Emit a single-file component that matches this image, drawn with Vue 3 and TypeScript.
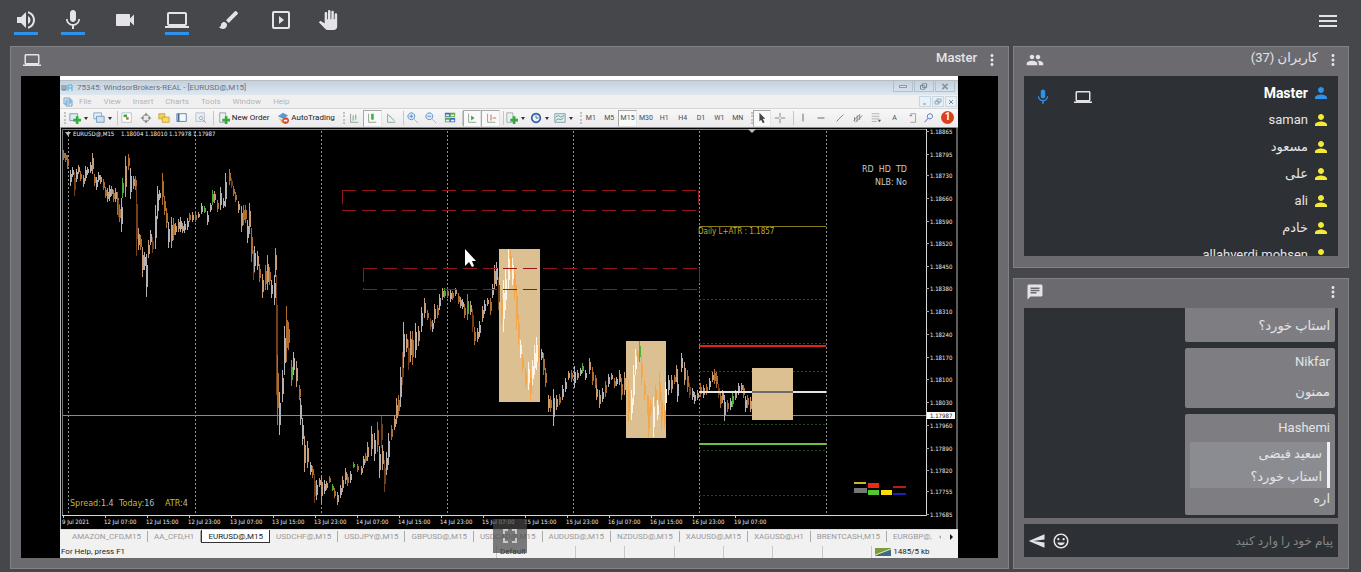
<script setup lang="ts">
import { h, ref } from 'vue'

const paths: Record<string, string> = {
  volume: 'M3 9v6h4l5 5V4L7 9H3zm13.5 3c0-1.77-1.02-3.29-2.5-4.03v8.05c1.48-.73 2.5-2.25 2.5-4.02zM14 3.23v2.06c2.89.86 5 3.54 5 6.71s-2.11 5.85-5 6.71v2.06c4.01-.91 7-4.49 7-8.77s-2.99-7.86-7-8.77z',
  mic: 'M12 14c1.66 0 2.99-1.34 2.99-3L15 5c0-1.66-1.34-3-3-3S9 3.34 9 5v6c0 1.66 1.34 3 3 3zm5.3-3c0 3-2.54 5.1-5.3 5.1S6.7 14 6.7 11H5c0 3.41 2.72 6.23 6 6.72V21h2v-3.28c3.28-.48 6-3.3 6-6.72h-1.7z',
  camera: 'M17 10.5V7c0-.55-.45-1-1-1H4c-.55 0-1 .45-1 1v10c0 .55.45 1 1 1h12c.55 0 1-.45 1-1v-3.5l4 4v-11l-4 4z',
  laptop: 'M20 18c1.1 0 1.99-.9 1.99-2L22 6c0-1.1-.9-2-2-2H4c-1.1 0-2 .9-2 2v10c0 1.1.9 2 2 2H0v2h24v-2h-4zM4 6h16v10H4V6z',
  brush: 'M7 14c-1.66 0-3 1.34-3 3 0 1.31-1.16 2-2 2 .92 1.22 2.49 2 4 2 2.21 0 4-1.79 4-4 0-1.66-1.34-3-3-3zm13.71-9.37l-1.34-1.34a.996.996 0 0 0-1.41 0L9 12.25 11.75 15l8.96-8.96a.996.996 0 0 0 0-1.41z',
  player: 'M10 8v8l5-4-5-4zm9-5H5c-1.1 0-2 .9-2 2v14c0 1.1.9 2 2 2h14c1.1 0 2-.9 2-2V5c0-1.1-.9-2-2-2zm0 16H5V5h14v14z',
  hand: 'M23 5.5V20c0 2.2-1.8 4-4 4h-7.3c-1.08 0-2.1-.43-2.85-1.19L1 14.83s1.26-1.23 1.3-1.25c.22-.19.49-.29.79-.29.22 0 .42.06.6.16.04.01 4.31 2.46 4.31 2.46V4c0-.83.67-1.5 1.5-1.5S11 3.17 11 4v7h1V1.5c0-.83.67-1.5 1.5-1.5S15 .67 15 1.5V11h1V2.5c0-.83.67-1.5 1.5-1.5s1.5.67 1.5 1.5V11h1V5.5c0-.83.67-1.5 1.5-1.5s1.5.67 1.5 1.5z',
  menu: 'M3 18h18v-2H3v2zm0-5h18v-2H3v2zm0-7v2h18V6H3z',
  more: 'M12 8c1.1 0 2-.9 2-2s-.9-2-2-2-2 .9-2 2 .9 2 2 2zm0 2c-1.1 0-2 .9-2 2s.9 2 2 2 2-.9 2-2-.9-2-2-2zm0 6c-1.1 0-2 .9-2 2s.9 2 2 2 2-.9 2-2-.9-2-2-2z',
  people: 'M16 11c1.66 0 2.99-1.34 2.99-3S17.66 5 16 5c-1.66 0-3 1.34-3 3s1.34 3 3 3zm-8 0c1.66 0 2.99-1.34 2.99-3S9.66 5 8 5C6.34 5 5 6.34 5 8s1.34 3 3 3zm0 2c-2.33 0-7 1.17-7 3.5V19h14v-2.5c0-2.33-4.67-3.5-7-3.5zm8 0c-.29 0-.62.02-.97.05 1.16.84 1.97 1.97 1.97 3.45V19h6v-2.5c0-2.33-4.67-3.5-7-3.5z',
  person: 'M12 12c2.21 0 4-1.79 4-4s-1.79-4-4-4-4 1.79-4 4 1.79 4 4 4zm0 2c-2.67 0-8 1.34-8 4v2h16v-2c0-2.66-5.33-4-8-4z',
  chat: 'M20 2H4c-1.1 0-1.99.9-1.99 2L2 22l4-4h14c1.1 0 2-.9 2-2V4c0-1.1-.9-2-2-2zM6 9h12v2H6V9zm8 5H6v-2h8v2zm4-6H6V6h12v2z',
  send: 'M21.99 21L1 12l20.99-9L22 10l-15 2 15 2z',
  smile: 'M11.99 2C6.47 2 2 6.48 2 12s4.47 10 9.99 10C17.52 22 22 17.52 22 12S17.52 2 11.99 2zM12 20c-4.42 0-8-3.58-8-8s3.58-8 8-8 8 3.58 8 8-3.58 8-8 8zm3.5-9c.83 0 1.5-.67 1.5-1.5S16.33 8 15.5 8 14 8.67 14 9.5s.67 1.5 1.5 1.5zm-7 0c.83 0 1.5-.67 1.5-1.5S9.33 8 8.5 8 7 8.67 7 9.5 7.67 11 8.5 11zm3.500 6.500c2.330 0 4.310-1.460 5.110-3.500H6.890c.8 2.040 2.780 3.500 5.110 3.500z',
  fullscreen: 'M7 14H5v5h5v-2H7v-3zm-2-4h2V7h3V5H5v5zm12 7h-3v2h5v-5h-2v3zM14 5v2h3v3h2V5h-5z',
}

const MIcon = (props: { name: string }) =>
  h('svg', { viewBox: '0 0 24 24', 'aria-hidden': 'true' }, [h('path', { d: paths[props.name], fill: 'currentColor' })])
MIcon.props = ['name']

interface Tool { icon: string; label: string; on?: boolean }
const toolGroups: Tool[][] = [
  [
    { icon: 'volume', label: 'Speaker', on: true },
    { icon: 'mic', label: 'Microphone', on: true },
  ],
  [{ icon: 'camera', label: 'Camera' }],
  [{ icon: 'laptop', label: 'Share screen', on: true }],
  [{ icon: 'brush', label: 'Whiteboard' }],
  [
    { icon: 'player', label: 'Player' },
    { icon: 'hand', label: 'Raise hand' },
  ],
]

const users = [
  { name: 'Master', master: true },
  { name: 'saman' },
  { name: 'مسعود' },
  { name: 'علی' },
  { name: 'ali' },
  { name: 'خادم' },
  { name: 'allahverdi mohsen' },
]

interface Message { from?: string; quote?: { from: string; text: string }; text: string }
const messages: Message[] = [
  { text: 'استاپ خورد؟' },
  { from: 'Nikfar', text: 'ممنون' },
  { from: 'Hashemi', quote: { from: 'سعید فیضی', text: 'استاپ خورد؟' }, text: 'اره' },
]
const draft = ref('')

const menus = ['File', 'View', 'Insert', 'Charts', 'Tools', 'Window', 'Help']

interface Shape { d: string; f?: string; s?: string }
interface Item { kind: 'handle' | 'sep' | 'icon' | 'drop' | 'wide' | 'find' | 'alert'; label?: string; text?: string; pressed?: boolean; shapes?: Shape[] }
const axes: Shape = { d: 'M3 2v10h9', s: '#8a9a8a' }
const plus: Shape = { d: 'M8 5h3v3h3v3h-3v3H8v-3H5V8h3z', f: '#2fae3a' }
const icon = (label: string, shapes: Shape[], pressed = false): Item => ({ kind: 'icon', label, shapes, pressed })
const drop = (label: string, shapes: Shape[]): Item => ({ kind: 'drop', label, shapes })
const period = (text: string, pressed = false): Item => ({ kind: 'icon', label: text, text, pressed })
const sep: Item = { kind: 'sep' }
const handle: Item = { kind: 'handle' }

const toolbar: Item[] = [
  handle,
  drop('New chart', [{ d: 'M1 2h9v8H1z', f: '#dfe9f2', s: '#7f93a8' }, plus]),
  drop('Profiles', [{ d: 'M1 1h9v7H1z', f: '#e8f0f7', s: '#7aa0c4' }, { d: 'M4 5h9v7H4z', f: '#cfe0ee', s: '#6d94ba' }]),
  sep,
  icon('Market watch', [{ d: 'M1 1h11v11H1z', f: '#fff', s: '#a9bccd' }, { d: 'M3 3h4v3H3z', f: '#3da744' }, { d: 'M6 6h3v3H6z', f: '#e0602a' }]),
  icon('Data window', [{ d: 'M7 1v4M7 9v4M1 7h4M9 7h4M7 3a4 4 0 1 0 .1 0z', s: '#666' }]),
  icon('Navigator', [{ d: 'M1 2h7v6H1z', f: '#f3d25a', s: '#c9a02e' }, { d: 'M5 6h8v6H5z', f: '#f6da6a', s: '#c9a02e' }]),
  icon('Terminal', [{ d: 'M1 2h11v9H1z', f: '#f6f9fc', s: '#55779f' }, { d: 'M2 2h2v9H2z', f: '#3d6596' }]),
  icon('Strategy tester', [{ d: 'M1 1h10v10H1z', f: '#e8eef3', s: '#b4bfc9' }, { d: 'M7 5a2 2 0 1 0 .1 0zM9 9l4 4', s: '#8fa3b8' }]),
  sep,
  { kind: 'wide', text: 'New Order', shapes: [{ d: 'M2 1h7v11H2z', f: '#eef0f2', s: '#8f9aa5' }, plus] },
  { kind: 'wide', text: 'AutoTrading', shapes: [{ d: 'M1 5l6-4 6 3-6 4z', f: '#5b9bd5' }, { d: 'M2 7l5 3 3-2v3l-4 2z', f: '#edb93c' }, { d: 'M10 6a4 4 0 1 0 .1 0z', f: '#d9482b' }, { d: 'M8 9h4v2H8z', f: '#fff' }] },
  handle,
  icon('Bar chart', [axes, { d: 'M6 4v6M9 3v6', s: '#4fa45a' }]),
  icon('Candlesticks', [axes, { d: 'M6 2h3v7H6z', f: '#35b44a' }], true),
  icon('Line chart', [axes, { d: 'M4 4c3 0 3 4 7 6', s: '#5da56a' }]),
  sep,
  icon('Zoom in', [{ d: 'M8 8l5 5', s: '#d9b23a' }, { d: 'M5 1a4 4 0 1 0 .1 0zM3 5h4M5 3v4', f: '#dceaf8', s: '#4f87c6' }]),
  icon('Zoom out', [{ d: 'M8 8l5 5', s: '#d9b23a' }, { d: 'M5 1a4 4 0 1 0 .1 0zM3 5h4', f: '#dceaf8', s: '#4f87c6' }]),
  icon('Tile windows', [{ d: 'M1 1h6v5H1zM7 7h6v5H7z', f: '#3e6fb4' }, { d: 'M7 1h6v5H7zM1 7h6v5H1z', f: '#5aa845' }, { d: 'M2 3h4v2H2zM8 3h4v2H8zM2 9h4v2H2zM8 9h4v2H8z', f: '#e9eef2' }]),
  sep,
  icon('Auto scroll', [axes, { d: 'M6 4l4 3-4 3z', f: '#3aa853' }], true),
  icon('Chart shift', [axes, { d: 'M7 3v7M9 7h4', s: '#c2553c' }], true),
  sep,
  drop('Indicators', [{ d: 'M1 1h7v11H1z', f: '#edf0f2', s: '#9aa5af' }, plus]),
  drop('Periods', [{ d: 'M7 1a6 6 0 1 0 .1 0z', f: '#2c62b0' }, { d: 'M7 3a4 4 0 1 0 .1 0z', f: '#eef4fa' }, { d: 'M7 4v3h3', s: '#555' }]),
  drop('Templates', [{ d: 'M1 2h12v10H1z', f: '#e4eef6', s: '#7391b3' }, { d: 'M2 6l3-2 3 2 4-2M2 10l3-2 3 1 3-2', s: '#4d9a5c' }]),
  handle,
  period('M1'), period('M5'), period('M15', true), period('M30'), period('H1'), period('H4'), period('D1'), period('W1'), period('MN'),
  handle,
  icon('Cursor', [{ d: 'M4 1l7 7H8l2 4-2 1-2-4-2 2z', f: '#444' }], true),
  icon('Crosshair', [{ d: 'M7 1v5M7 8v5M1 7h5M8 7h5', s: '#777' }]),
  sep,
  icon('Vertical line', [{ d: 'M7 2v9', s: '#555' }]),
  icon('Horizontal line', [{ d: 'M3 7h8', s: '#555' }]),
  icon('Trendline', [{ d: 'M3 11l8-8', s: '#777' }]),
  icon('Channel', [{ d: 'M2 10l7-7M4 12l8-8M3 6v5M6 4v7M9 3v6', s: '#777' }]),
  icon('Fibonacci', [{ d: 'M2 2h9M2 5h9M2 8h9M2 11h6', s: '#aaa' }, { d: 'M9 9h4l-2 3z', f: '#666' }]),
  { kind: 'icon', label: 'Text', text: 'A' },
  icon('Text label', [{ d: 'M4 2h6v10H4', s: '#999' }, { d: 'M3 3h3v2H3z', f: '#999' }]),
  { kind: 'find', label: 'Search', shapes: [{ d: 'M8 2a3 3 0 1 0 .1 0zM6 7l-4 5', s: '#3c64c8' }] },
  { kind: 'alert', label: 'Alerts', text: '1' },
]

const tabs = ['AMAZON_CFD,M15', 'AA_CFD,H1', 'EURUSD@,M15', 'USDCHF@,M15', 'USDJPY@,M15', 'GBPUSD@,M15', 'USDCAD@,M15', 'AUDUSD@,M15', 'NZDUSD@,M15', 'XAUUSD@,M15', 'XAGUSD@,H1', 'BRENTCASH,M15', 'EURGBP@,']

const prices: [string, number][] = [
  ['1.18865', 131], ['1.18795', 154], ['1.18730', 175], ['1.18660', 198], ['1.18590', 221], ['1.18520', 243],
  ['1.18450', 266], ['1.18380', 288], ['1.18310', 311], ['1.18240', 334], ['1.18170', 357], ['1.18100', 379],
  ['1.18030', 402], ['1.17960', 425], ['1.17890', 448], ['1.17820', 470], ['1.17755', 491], ['1.17685', 514],
]
const times = ['9 Jul 2021', '12 Jul 07:00', '12 Jul 15:00', '12 Jul 23:00', '13 Jul 07:00', '13 Jul 15:00', '13 Jul 23:00', '14 Jul 07:00', '14 Jul 15:00', '14 Jul 23:00', '15 Jul 07:00', '15 Jul 15:00', '15 Jul 23:00', '16 Jul 07:00', '16 Jul 15:00', '16 Jul 23:00', '19 Jul 07:00']
const days = [68, 195, 321, 447, 573, 699, 826]

// Each bar: x, high, low, tone (o orange, w white, t tan, d brown, g green, W bright, O amber)
const barData = `
63 150 160 o,65 153 162 o,67 155 169 o,70 170 186 w,72 167 177 w,74 172 196 d,76 169 182 w,78 165 174 t,80 171 181 o,83 175 187 t,85 166 181 w,87 167 175 w,90 162 173 w,92 153 174 t,94 174 186 o,96 177 190 w,98 172 182 w,100 175 184 t,
103 179 190 o,105 187 198 o,107 188 202 t,109 185 201 w,111 186 196 t,113 190 202 o,115 188 202 t,117 192 215 o,118 200 217 d,119 205 222 o,121 198 232 w,122 178 198 g,125 156 197 t,128 154 170 o,130 168 199 w,133 176 189 t,135 176 190 o,
136 186 256 d,138 228 250 t,140 235 250 o,142 247 277 t,144 252 270 w,146 254 297 w,148 240 258 t,150 230 245 w,152 237 253 d,155 205 249 w,157 186 219 w,159 190 200 w,162 173 205 o,164 196 215 o,166 208 228 o,168 222 248 w,
171 217 248 t,173 218 240 o,175 223 235 t,178 219 232 t,180 217 232 w,182 223 233 t,184 221 233 w,187 218 230 w,189 213 222 o,192 212 222 t,195 213 222 o,198 212 218 t,201 203 214 w,204 206 213 g,207 211 225 w,210 203 212 w,212 190 205 g,
214 191 203 t,217 200 212 o,220 187 210 w,223 198 208 w,225 173 207 w,229 169 185 o,231 178 188 d,233 186 196 o,235 192 202 o,238 201 213 t,241 206 232 t,243 205 225 o,245 205 223 o,247 220 243 w,249 203 234 t,251 228 262 o,253 250 280 d,
254 246 272 w,257 251 270 t,259 264 282 o,262 274 298 t,265 265 290 o,267 255 290 t,269 267 285 o,271 280 298 w,274 275 305 w,275 248 277 t,276 275 395 d,277 355 425 o,279 392 435 w,282 370 402 w,284 326 375 w,286 306 362 o,288 322 350 o,
291 360 386 g,293 352 375 w,296 361 387 t,299 385 400 o,300 398 425 w,302 418 445 w,304 436 472 t,307 441 468 t,310 462 475 w,312 466 478 o,314 474 503 d,316 480 500 w,319 478 487 t,321 475 503 t,324 480 494 w,326 481 490 t,329 476 483 o,
332 484 491 g,334 488 498 o,337 492 505 t,340 485 498 w,342 476 492 t,345 468 484 t,347 474 486 o,350 471 483 w,353 462 468 g,357 464 472 o,361 466 475 t,363 456 468 w,365 453 463 o,367 442 461 t,371 426 456 t,374 433 461 w,377 422 452 o,
379 446 478 w,381 416 448 d,382 445 470 t,384 460 492 d,386 452 475 w,388 433 465 w,391 425 440 o,394 415 430 t,396 398 424 t,398 395 416 o,400 367 407 w,402 352 385 d,403 322 368 w,406 334 352 t,408 340 370 d,410 331 362 t,412 331 365 o,
415 323 358 w,418 326 346 t,421 307 332 w,424 298 318 t,427 310 320 o,430 318 330 d,432 320 332 w,434 304 323 t,437 305 318 o,439 294 310 w,442 288 300 t,444 288 298 g,447 288 298 o,450 290 302 w,452 291 300 o,455 288 296 t,458 293 304 o,
460 297 308 t,462 299 309 w,464 304 318 o,467 294 320 g,470 301 315 t,472 309 332 d,474 327 345 o,477 328 342 t,479 321 337 w,482 306 322 t,484 300 314 w,487 298 306 t,490 298 315 o,492 284 298 w,494 265 290 t,496 262 286 w,498 277 310 d,
501 290 325 O,503 280 332 W,505 268 310 W,508 249 290 W,510 250 272 O,512 258 285 W,514 265 300 O,516 285 330 O,518 315 345 O,520 340 358 W,522 355 372 O,525 368 388 O,528 362 390 W,530 370 401 O,532 360 385 W,534 345 375 W,536 337 370 W,
538 345 362 O,541 349 360 w,543 353 375 o,545 368 387 o,548 395 412 t,550 396 412 o,553 389 426 w,556 395 410 t,559 394 405 o,562 385 400 w,565 378 392 w,568 371 380 t,571 370 382 o,574 366 388 w,577 370 380 t,580 368 376 w,582 363 373 g,
585 370 380 w,589 358 374 t,592 367 385 o,595 375 388 o,596 385 400 t,599 390 408 t,602 388 402 w,605 381 397 o,608 374 387 w,611 373 380 t,614 378 388 o,616 377 386 w,619 370 385 t,621 378 400 o,624 372 395 t,628 380 422 O,631 390 420 W,
633 365 405 W,635 349 375 W,637 350 362 O,639 341 362 g,641 355 385 O,644 380 400 O,647 395 415 O,648 396 438 O,650 400 416 O,653 397 437 W,655 385 405 O,657 400 420 W,659 372 410 O,661 392 430 O,664 405 428 O,665 382 410 W,668 375 395 w,
671 375 393 t,674 375 384 o,676 365 382 t,677 378 402 w,681 353 372 w,684 362 385 t,687 370 392 o,689 383 398 d,692 388 400 w,694 392 404 w,697 390 400 t,700 383 397 o,703 385 398 t,706 384 395 o,709 378 390 w,712 372 382 t,714 369 384 o,
716 372 388 o,718 384 398 d,720 392 408 o,722 390 403 t,724 395 421 w,727 400 412 o,730 398 410 w,732 392 407 g,735 390 400 t,738 383 395 w,741 383 392 t,743 385 398 o,745 396 412 w,747 395 408 o,750 397 412 t,752 400 418 o`
const tones: Record<string, string> = { o: '#b06e2c', w: '#b4b2b4', t: '#c89c74', d: '#74401a', g: '#4fae3a', W: '#fff3df', O: '#f3a64a' }
const bars = barData.trim().split(',').map((row) => {
  const [x, top, bottom, tone] = row.trim().split(' ')
  const y = Number(top)
  const size = Number(bottom) - y
  return { x: Number(x), y, size, bodyY: y + Math.round(size / 4), body: Math.round(size / 2), color: tones[tone] }
})
</script>

<template>
  <div class="room">
    <header class="topbar">
      <nav class="tools" aria-label="Tools">
        <div v-for="(group, g) in toolGroups" :key="g" class="tool-group">
          <button v-for="t in group" :key="t.icon" type="button" class="tool" :class="{ on: t.on }" :aria-label="t.label">
            <MIcon :name="t.icon" class="tool-icon" :class="t.icon" />
          </button>
        </div>
      </nav>
      <button type="button" class="plain" aria-label="Menu"><MIcon name="menu" class="menu-icon" /></button>
    </header>

    <main class="columns">
      <section class="panel share">
        <header class="panel-head">
          <MIcon name="laptop" class="head-icon" />
          <h2 class="head-title">Master</h2>
          <button type="button" class="plain" aria-label="Screen options"><MIcon name="more" class="more-icon" /></button>
        </header>
        <div class="stage">
          <div class="screen">
            <div class="win-title">
              <svg class="win-logo" viewBox="0 0 12 8"><path d="M1 1v5h4V1M3 1v5" fill="none" stroke="#5c7f9c" /><path d="M7 7V1h4v6M7 4h4" fill="none" stroke="#4ab2dc" /></svg>
              <span class="win-name">75345: WindsorBrokers-REAL - [EURUSD@,M15]</span>
              <div class="win-buttons">
                <button type="button" aria-label="Minimize"><svg viewBox="0 0 10 8"><path d="M1 3h8v2H1z" fill="#fff" stroke="#70808f" /></svg></button>
                <button type="button" aria-label="Restore"><svg viewBox="0 0 10 8"><path d="M3 1h5v4H3zM1 3h5v4H1z" fill="#eef4fa" stroke="#66788a" /></svg></button>
                <button type="button" aria-label="Close"><svg viewBox="0 0 10 8"><path d="M2 1l6 6M8 1L2 7" fill="none" stroke="#8896a4" stroke-width="2" /></svg></button>
              </div>
            </div>
            <div class="win-menu">
              <svg class="menu-logo" viewBox="0 0 10 10"><path d="M1 1h6v6H1zM3 3h6v6H3zM3 5h6" fill="#e6f0f8" stroke="#75a3cb" /></svg>
              <button v-for="m in menus" :key="m" type="button">{{ m }}</button>
              <div class="child-buttons">
                <button type="button" aria-label="Minimize chart"><svg viewBox="0 0 8 8"><path d="M2 6h3" stroke="#7d93a8" /></svg></button>
                <button type="button" aria-label="Restore chart"><svg viewBox="0 0 8 8"><path d="M3 1h4v3H3zM1 3h4v3H1z" fill="none" stroke="#8fa3b5" /></svg></button>
                <button type="button" aria-label="Close chart"><svg viewBox="0 0 8 8"><path d="M2 2l4 4M6 2L2 6" stroke="#7b8995" /></svg></button>
              </div>
            </div>
            <div class="win-toolbar">
              <template v-for="(item, i) in toolbar" :key="i">
                <span v-if="item.kind === 'handle'" class="tb-handle"></span>
                <span v-else-if="item.kind === 'sep'" class="tb-sep"></span>
                <button v-else type="button" class="tb" :class="[item.kind, { pressed: item.pressed }]" :aria-label="item.label">
                  <svg v-if="item.shapes" class="tb-icon" viewBox="0 0 14 14">
                    <path v-for="(s, k) in item.shapes" :key="k" :d="s.d" :fill="s.f ?? 'none'" :stroke="s.s ?? 'none'" />
                  </svg>
                  <span v-if="item.text">{{ item.text }}</span>
                  <span v-if="item.kind === 'drop'" class="caret"></span>
                </button>
              </template>
            </div>

            <svg class="chart" viewBox="60 127 898 403" role="img" aria-label="EURUSD@,M15">
              <rect x="60" y="127" width="898" height="403" fill="#000" />
              <path d="M60 127h898" stroke="#8a8a8a" stroke-width="2" />
              <path d="M60.5 127v403M957 127v403" stroke="#b8b8b8" />
              <path d="M62.5 515V129.5H926" fill="none" stroke="#777" />
              <path d="M926.5 129v386.5H62" fill="none" stroke="#d8d8d8" />
              <path d="M60 529.5h898" stroke="#ddd" />

              <path v-for="x in days" :key="x" :d="`M${x + 0.5} 131V513`" stroke="#8f8f8f" stroke-dasharray="2 2" />
              <path d="M63 415.5h863" stroke="#8a8a8a" />

              <g fill="#dcc091">
                <rect x="499" y="249" width="41" height="153" />
                <rect x="626" y="341" width="40" height="97" />
              </g>
              <g v-for="b in bars" :key="b.x" :fill="b.color">
                <rect :x="b.x" :y="b.y" width="1" :height="b.size" />
                <rect :x="b.x" :y="b.bodyY" width="2" :height="b.body" />
              </g>
              <rect x="752" y="368" width="41" height="52" fill="#dcc091" />

              <g fill="none" stroke="#96141e" stroke-dasharray="14 6">
                <path d="M342 190.5H699M342 210.5H699M342.5 190V211M698.5 190V211" />
                <path d="M363 268.5H699M363 289.5H699M363.5 268V290M699.5 268V290" />
              </g>

              <path d="M699 226.5H826" stroke="#8a7a1a" />
              <g stroke-dasharray="2 2">
                <path d="M699 299.5H826M699 343.5H826M699 371.5H752M793 371.5H826" stroke="#96181f" />
                <path d="M699 424.5H826M699 450.5H826M699 495.5H826" stroke="#22451c" />
              </g>
              <path d="M699 346H826" stroke="#e02418" stroke-width="2" />
              <path d="M699 392H826" stroke="#e4e4e4" stroke-width="2" />
              <path d="M752 392H793" stroke="#6f6c68" stroke-width="2" />
              <path d="M699 444H826" stroke="#6cc238" stroke-width="2" />
              <path d="M748 129h8l-4 4zM65 132h6l-3 4z" fill="#bbb" />

              <g class="chart-small" fill="#eee">
                <text x="73" y="136">EURUSD@,M15</text>
                <text x="121" y="136">1.18004 1.18010 1.17978 1.17987</text>
              </g>
              <text class="chart-note" x="698" y="234" fill="#c2ab22">Daily L+ATR : 1.1857</text>
              <g class="chart-text" fill="#ccc" text-anchor="end">
                <text x="907" y="172">RD&#160; HD&#160; TD</text>
                <text x="907" y="185">NLB: No</text>
              </g>
              <g class="chart-text" fill="#c8bc2c">
                <text x="70" y="506">Spread:<tspan fill="#bbb">1.4</tspan></text>
                <text x="119" y="506">Today:<tspan fill="#bbb">16</tspan></text>
                <text x="165" y="506">ATR:<tspan fill="#bbb">4</tspan></text>
              </g>

              <g class="chart-small" fill="#eee">
                <g v-for="p in prices" :key="p[0]">
                  <path :d="`M926 ${p[1] + 0.5}h3`" stroke="#aaa" />
                  <text x="930" :y="p[1] + 3">{{ p[0] }}</text>
                </g>
                <g v-for="(t, i) in times" :key="t">
                  <path :d="`M${63.5 + i * 42} 515v3`" stroke="#ccc" />
                  <text :x="62 + i * 42" y="524">{{ t }}</text>
                </g>
              </g>
              <rect x="927" y="412" width="28" height="7" fill="#fff" />
              <text class="chart-small" x="930" y="418" fill="#111">1.17987</text>

              <rect x="854" y="482" width="12" height="2" fill="#cbb928" />
              <rect x="854" y="488" width="13" height="5" fill="#777" />
              <rect x="868" y="483" width="11" height="5" fill="#ee2a12" />
              <rect x="868" y="490" width="11" height="5" fill="#4fca32" />
              <rect x="881" y="490" width="11" height="5" fill="#fbdc08" />
              <rect x="893" y="486" width="13" height="2" fill="#b51f16" />
              <rect x="893" y="493" width="13" height="2" fill="#2020b8" />

              <path d="M465 249v17l4-4 3 5 2-1-2-5h4z" fill="#fff" />
            </svg>

            <div class="tabs">
              <button v-for="(t, i) in tabs" :key="t" type="button" class="tab" :class="{ active: i === 2 }">{{ t }}</button>
              <span class="tab-arrows"><svg viewBox="0 0 16 8"><path d="M3 2v4L1 4z" fill="#aaa" /><path d="M12 1v6l3-3z" fill="#111" /></svg></span>
            </div>
            <div class="status">
              <span class="status-help">For Help, press F1</span>
              <span class="status-cell grow">Default</span>
              <span v-for="n in 6" :key="n" class="status-cell"></span>
              <span class="status-cell net">
                <svg viewBox="0 0 16 8"><path d="M0 0h16v8H0z" fill="#7f9a3a" /><path d="M0 8l16-7v7z" fill="#3f6a86" /><path d="M0 7l16-6" stroke="#dfe6c8" /></svg>
                1485/5 kb
              </span>
            </div>
          </div>
          <button type="button" class="full" aria-label="Full screen"><MIcon name="fullscreen" class="full-icon" /></button>
        </div>
      </section>

      <aside class="side" dir="rtl" lang="fa">
        <section class="panel users">
          <header class="panel-head">
            <button type="button" class="plain" aria-label="Users options"><MIcon name="more" class="more-icon" /></button>
            <h2 class="head-title">کاربران (37)</h2>
            <MIcon name="people" class="head-icon" />
          </header>
          <ul class="user-list">
            <li v-for="u in users" :key="u.name" class="user" :class="{ master: u.master }">
              <MIcon name="person" class="user-icon" />
              <span class="user-name">{{ u.name }}</span>
              <template v-if="u.master">
                <MIcon name="laptop" class="user-screen" />
                <MIcon name="mic" class="user-mic" />
              </template>
            </li>
          </ul>
        </section>

        <section class="panel chat-panel">
          <header class="panel-head">
            <button type="button" class="plain" aria-label="Chat options"><MIcon name="more" class="more-icon" /></button>
            <span class="head-title"></span>
            <MIcon name="chat" class="head-icon" />
          </header>
          <div class="log">
            <article v-for="(m, i) in messages" :key="i" class="message">
              <div v-if="m.from" class="from">{{ m.from }}</div>
              <blockquote v-if="m.quote" class="quote">
                <div>{{ m.quote.from }}</div>
                <div>{{ m.quote.text }}</div>
              </blockquote>
              <p class="body" :class="{ spaced: !m.quote }">{{ m.text }}</p>
            </article>
          </div>
          <form class="composer" @submit.prevent="draft = ''">
            <input v-model="draft" type="text" class="entry" placeholder="پیام خود را وارد کنید" aria-label="پیام" />
            <button type="button" class="plain" aria-label="Emoji"><MIcon name="smile" class="compose-icon" /></button>
            <button type="submit" class="plain" aria-label="Send"><MIcon name="send" class="compose-icon" /></button>
          </form>
        </section>
      </aside>
    </main>
  </div>
</template>

<style>
body {
  margin: 0;
  background: #45474b;
}
</style>

<style scoped>
* {
  box-sizing: border-box;
}
.room {
  display: flex;
  flex-direction: column;
  height: 100vh;
  background: #45474b;
  color: #e4e4e8;
  font-family: Roboto, "DejaVu Sans", sans-serif;
  font-size: 13px;
}
button {
  margin: 0;
  padding: 0;
  border: 0;
  background: none;
  color: inherit;
  font: inherit;
}
.plain,
.tool {
  display: flex;
}
svg {
  display: block;
  flex: none;
}
.topbar {
  display: flex;
  flex: 0 0 46px;
  justify-content: space-between;
  padding: 8px 21px 0 14px;
}
.tools,
.tool-group {
  display: flex;
  gap: 28px;
}
.tool-group {
  gap: 23px;
}
.tool {
  justify-content: center;
  width: 24px;
  height: 27px;
  border-bottom: 3px solid transparent;
}
.tool.on {
  border-color: #2f92ea;
}
.tool-icon {
  width: 24px;
  height: 24px;
}
.tool-icon.hand {
  width: 20px;
}
.menu-icon {
  width: 24px;
  height: 26px;
}
.columns {
  display: flex;
  flex: 1;
  gap: 4px;
  min-height: 0;
  padding: 0 12px 3px 10px;
}
.panel {
  display: flex;
  flex-direction: column;
  min-height: 0;
  padding: 0 10px 10px;
  border: 1px solid #808285;
  background: #6b6b6f;
}
.share {
  flex: 1;
  min-width: 0;
}
.side {
  display: flex;
  flex: 0 0 336px;
  flex-direction: column;
  gap: 10px;
}
.side .panel {
  padding-bottom: 11px;
}
.users {
  flex: 220 1 0;
}
.chat-panel {
  flex: 292 1 0;
}
.panel-head {
  display: flex;
  flex: 0 0 29px;
  align-items: center;
  gap: 6px;
  margin-inline: -4px 2px;
  padding-bottom: 3px;
}
.share .panel-head {
  margin-inline: 2px -3px;
}
.head-icon,
.more-icon {
  width: 18px;
  height: 18px;
}
.head-title {
  flex: 1;
  margin: 0 0 4px;
  font-size: 13px;
  font-weight: 400;
  line-height: 20px;
}
.share .head-title {
  font-weight: 500;
  text-align: right;
}
.stage {
  position: relative;
  display: flex;
  flex: 1;
  min-height: 0;
  padding: 0 40px 0 39px;
  background: #000;
}
.screen {
  display: flex;
  flex: 1;
  flex-direction: column;
  min-width: 0;
  overflow: hidden;
  border-top: 4px solid #fff;
  background: #f2f1f2;
  color: #444;
  font-family: Roboto, "Open Sans", sans-serif;
  font-size: 8px;
  line-height: 12px;
}
.win-title {
  display: flex;
  flex: 0 0 15px;
  align-items: center;
  padding: 0 3px 0 1px;
  border-top: 1px solid #b7bcc0;
  background: linear-gradient(#c2d1df, #dfe7ee);
}
.win-logo {
  width: 12px;
  height: 8px;
}
.win-name {
  flex: 1;
  padding-left: 4px;
  color: #69727b;
}
.win-buttons,
.child-buttons {
  display: flex;
  align-self: flex-start;
  gap: 1px;
}
.win-buttons button {
  display: flex;
  align-items: center;
  justify-content: center;
  width: 20px;
  height: 11px;
  border: 1px solid #b3c0cc;
  border-top: 0;
}
.win-buttons svg {
  width: 10px;
  height: 7px;
}
.win-menu {
  display: flex;
  flex: 0 0 13px;
  align-items: center;
  gap: 12px;
  padding: 0 1px 0 3px;
  background: #f1f0f1;
  color: #b4b4b4;
}
.menu-logo {
  width: 10px;
  height: 10px;
  margin-right: -6px;
}
.child-buttons {
  align-self: center;
  margin-left: auto;
}
.child-buttons button {
  width: 12px;
  height: 11px;
  padding: 1px;
  border: 1px solid #c8d6e2;
  background: #e9f1f8;
}
.child-buttons svg {
  width: 8px;
  height: 8px;
}
.win-toolbar {
  display: flex;
  flex: 0 0 19px;
  align-items: center;
  border-top: 1px solid #d5d5d7;
  background: linear-gradient(#f8f8f8, #eceaec);
  color: #4c4c4c;
}
.tb-handle {
  flex: 0 0 6px;
  height: 12px;
  border-right: 2px dotted #c2c2c4;
}
.tb-sep {
  flex: 0 0 4px;
  height: 14px;
  border-right: 1px solid #c6c6c8;
}
.tb {
  display: flex;
  align-items: center;
  justify-content: center;
  height: 17px;
  white-space: nowrap;
}
.tb.icon {
  flex: 1 1 0;
  min-width: 0;
  border: 1px solid transparent;
  font-size: 7px;
}
.tb.icon.pressed {
  border-color: #a8a8aa #e4e4e4 #e4e4e4 #a8a8aa;
  background: #f9f9f9;
}
.tb.drop {
  flex: 0 0 24px;
  gap: 3px;
}
.tb.wide {
  flex: 0 0 auto;
  gap: 2px;
  padding: 0 4px;
  color: #222;
}
.tb.find {
  flex: 0 0 13px;
}
.tb.alert {
  flex: 0 0 13px;
  height: 13px;
  margin: 0 4px 2px 6px;
  border-radius: 50%;
  background: #d8401f;
  color: #fff;
  font-size: 10px;
  font-weight: 700;
}
.tb-icon {
  width: 12px;
  height: 12px;
}
.caret {
  border: 2px solid transparent;
  border-top: 3px solid #333;
  border-bottom: 0;
}
.chart {
  flex: 1;
  width: 100%;
  min-height: 0;
  background: #000;
}
.chart-small {
  font-family: "DejaVu Sans Condensed", "DejaVu Sans", sans-serif;
  font-size: 6px;
}
.chart-text {
  font-family: "DejaVu Sans", sans-serif;
  font-size: 8px;
}
.chart-note {
  font-family: "DejaVu Sans Condensed", "DejaVu Sans", sans-serif;
  font-size: 8px;
}
.tabs {
  display: flex;
  flex: 0 0 16px;
  align-items: flex-start;
  color: #999;
}
.tab {
  flex: 1 0 auto;
  height: 11px;
  margin-top: 1px;
  border-right: 1px solid #aaa;
  line-height: 11px;
}
.tab:first-child {
  padding-left: 6px;
}
.tab.active {
  height: 13px;
  margin-top: 0;
  border: 1px solid #333;
  border-top: 0;
  background: #fff;
  color: #222;
}
.tab:nth-last-child(2) {
  border-right: 0;
}
.tab-arrows {
  flex: 0 0 20px;
  padding-top: 3px;
}
.tab-arrows svg {
  width: 16px;
  height: 8px;
}
.status {
  display: flex;
  flex: 0 0 12px;
  color: #222;
}
.status-help {
  flex: 441 1 0;
  padding-left: 1px;
}
.status-cell {
  flex: 49 1 0;
  border-left: 1px solid #c8c8c8;
}
.status-cell.grow {
  flex: 76 1 0;
  padding-left: 3px;
}
.status-cell.net {
  display: flex;
  flex: 84 1 0;
  align-items: center;
  gap: 2px;
  padding-left: 3px;
}
.net svg {
  width: 16px;
  height: 8px;
}
.full {
  position: absolute;
  bottom: 5px;
  left: 50%;
  display: flex;
  align-items: center;
  justify-content: center;
  width: 34px;
  height: 34px;
  margin-left: -17px;
  background: rgba(70, 70, 70, 0.7);
  color: #c8c8c8;
}
.full-icon {
  width: 24px;
  height: 24px;
}
.user-list {
  flex: 1;
  margin: 0;
  padding: 3px 8px 0 10px;
  overflow: hidden;
  background: #2d3034;
  list-style: none;
}
.user {
  display: flex;
  align-items: center;
  height: 27px;
}
.user-icon {
  width: 18px;
  height: 18px;
  color: #f4ea35;
}
.user-name {
  flex: 1;
  padding-right: 4px;
  line-height: 20px;
}
.master .user-icon,
.user-mic {
  color: #2f92ea;
}
.master .user-name {
  color: #fff;
  font-size: 14px;
  font-weight: 700;
}
.user-screen,
.user-mic {
  width: 18px;
  height: 18px;
  margin-top: 8px;
}
.user-mic {
  margin-right: 22px;
}
.log {
  display: flex;
  flex: 1;
  flex-direction: column;
  justify-content: flex-end;
  gap: 6px;
  min-height: 0;
  padding: 0 3px 3px;
  overflow: hidden;
  background: #2d3034;
}
.message {
  flex: none;
  width: 150px;
  padding: 0 5px 5px;
  border-radius: 2px;
  background: #7e7e82;
}
.from {
  line-height: 28px;
}
.quote {
  margin: 0;
  padding: 0 5px;
  border-right: 3px solid #f0f0f4;
  background: #8b8b92;
  line-height: 23px;
}
.body {
  margin: 0;
  line-height: 22px;
}
.body.spaced {
  padding-top: 5px;
}
.message:first-child {
  padding-top: 2px;
  border-radius: 0 0 2px 2px;
}
.composer {
  display: flex;
  flex: 0 0 33px;
  align-items: center;
  gap: 6px;
  margin-top: 6px;
  padding: 0 5px 0 4px;
  background: #2d3034;
}
.entry {
  flex: 1;
  min-width: 0;
  padding: 0;
  border: 0;
  outline: 0;
  background: none;
  color: inherit;
  font: inherit;
  font-size: 12px;
}
.entry::placeholder {
  color: #85868a;
  opacity: 1;
}
.compose-icon {
  width: 18px;
  height: 18px;
}
</style>
